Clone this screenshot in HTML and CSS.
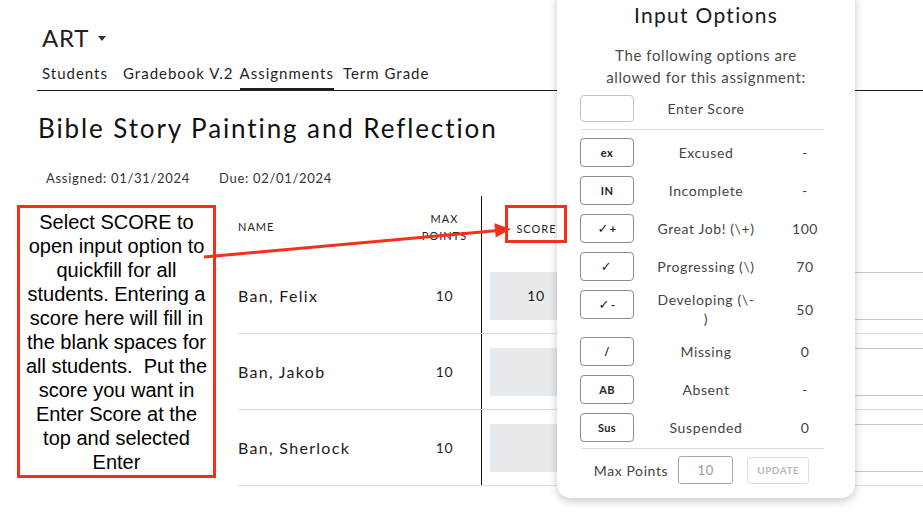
FILE: index.html
```html
<!DOCTYPE html>
<html lang="en">
<head>
<meta charset="utf-8">
<title>Bible Story Painting and Reflection</title>
<link rel="stylesheet" href="styles.css">
</head>
<body>
<div class="page">
  <div class="course">ART <span class="caret"></span></div>
  <nav class="tabs">
    <span class="tab t1">Students</span>
    <span class="tab t2">Gradebook V.2</span>
    <span class="tab t3 active">Assignments</span>
    <span class="tab t4">Term Grade</span>
  </nav>
  <h1 class="title">Bible Story Painting and Reflection</h1>
  <div class="dates"><span>Assigned: 01/31/2024</span><span>Due: 02/01/2024</span></div>
  <div class="grid">
    <div class="row head">
      <div class="c name">NAME</div>
      <div class="c max">MAX<br>POINTS</div>
      <div class="c score">SCORE</div>
      <div class="c rest"></div>
    </div>
    <div class="row body">
      <div class="c name">Ban, Felix</div>
      <div class="c max">10</div>
      <div class="c score"><div class="score-box">10</div></div>
      <div class="c rest"><div class="rest-box"></div></div>
    </div>
    <div class="row body">
      <div class="c name">Ban, Jakob</div>
      <div class="c max">10</div>
      <div class="c score"><div class="score-box"></div></div>
      <div class="c rest"><div class="rest-box"></div></div>
    </div>
    <div class="row body">
      <div class="c name">Ban, Sherlock</div>
      <div class="c max">10</div>
      <div class="c score"><div class="score-box"></div></div>
      <div class="c rest"><div class="rest-box"></div></div>
    </div>
  </div>
</div>

<div class="popup">
  <h2 class="popup-title">Input Options</h2>
  <p class="popup-sub">The following options are<br>allowed for this assignment:</p>
  <div class="opts">
    <div class="opt"><span class="key key-empty"></span><span class="opt-label">Enter Score</span><span class="opt-val"></span></div>
    <div class="sep"></div>
    <div class="opt"><span class="key">ex</span><span class="opt-label">Excused</span><span class="opt-val">-</span></div>
    <div class="opt"><span class="key">IN</span><span class="opt-label">Incomplete</span><span class="opt-val">-</span></div>
    <div class="opt"><span class="key"><span class="chk">✓</span>+</span><span class="opt-label">Great Job! (\+)</span><span class="opt-val">100</span></div>
    <div class="opt"><span class="key"><span class="chk">✓</span></span><span class="opt-label">Progressing (\)</span><span class="opt-val">70</span></div>
    <div class="opt"><span class="key"><span class="chk">✓</span>-</span><span class="opt-label">Developing (\-<br>)</span><span class="opt-val">50</span></div>
    <div class="opt"><span class="key">/</span><span class="opt-label">Missing</span><span class="opt-val">0</span></div>
    <div class="opt"><span class="key">AB</span><span class="opt-label">Absent</span><span class="opt-val">-</span></div>
    <div class="opt last"><span class="key">Sus</span><span class="opt-label">Suspended</span><span class="opt-val">0</span></div>
    <div class="sep sep2"></div>
  </div>
  <div class="maxrow">
    <span class="max-label">Max Points</span>
    <span class="max-input">10</span>
    <span class="update">UPDATE</span>
  </div>
</div>

<div class="callout">Select SCORE to<br>open input option to<br>quickfill for all<br>students. Entering a<br>score here will fill in<br>the blank spaces for<br>all students.&nbsp; Put the<br>score you want in<br>Enter Score at the<br>top and selected<br>Enter</div>
<div class="score-mark"></div>
<svg class="arrow" width="923" height="532" viewBox="0 0 923 532">
  <line x1="204" y1="257" x2="498" y2="230.6" stroke="#f4301c" stroke-width="3"/>
  <polygon points="511,229 495.7,237.6 494.4,223.3" fill="#f4301c"/>
</svg>
</body>
</html>
```

FILE: styles.css
```css
html, body {
  margin: 0;
  padding: 0;
}
body {
  width: 923px;
  height: 532px;
  overflow: hidden;
  position: relative;
  background: #fff;
  color: #1f1f1f;
  font-family: Lato, "DejaVu Sans", sans-serif;
}
.page {
  padding: 23px 0 0 37px;
}
.course {
  display: flex;
  align-items: center;
  gap: 9px;
  margin-left: 5px;
  height: 30px;
  font-size: 24px;
  line-height: 30px;
  letter-spacing: 0.8px;
}
.caret {
  width: 0;
  height: 0;
  border-left: 4.5px solid transparent;
  border-right: 4.5px solid transparent;
  border-top: 5px solid #333;
  margin-top: 1px;
}
.tabs {
  display: flex;
  align-items: flex-start;
  margin-top: 10px;
  padding-left: 5px;
  border-bottom: 1px solid #1f1f1f;
}
.tab {
  font-size: 15px;
  line-height: 20px;
  letter-spacing: 1px;
  padding-bottom: 7px;
}
.t1 { margin-right: 15px; }
.t2 { margin-right: 6px; }
.t3 { margin-right: 9px; }
.tab.active {
  border-bottom: 3px solid #1f1f1f;
  padding-bottom: 5px;
  margin-bottom: -1px;
}
.title {
  margin: 21px 0 0 1px;
  font-size: 26px;
  line-height: 32px;
  font-weight: 400;
  letter-spacing: 1.9px;
  color: #111;
}
.dates {
  display: flex;
  gap: 29px;
  margin: 26px 0 0 9px;
  font-size: 13px;
  line-height: 16px;
  letter-spacing: 0.7px;
  color: #333;
}
.grid {
  margin: 10px 0 0 201px;
}
.row {
  display: grid;
  grid-template-columns: 170px 73px 110px 1fr;
}
.row.head {
  height: 62px;
}
.row.body {
  height: 75px;
  border-bottom: 1px solid #dcdcdc;
}
.c {
  display: flex;
  align-items: center;
}
.head .c {
  font-size: 11px;
  letter-spacing: 1px;
  color: #222;
}
.head .name {
  padding-bottom: 2px;
  box-sizing: border-box;
}
.head .max {
  line-height: 17px;
}
.max {
  justify-content: center;
  text-align: center;
}
.body .name {
  font-size: 16px;
  letter-spacing: 1.3px;
  color: #1a1a1a;
}
.body .max {
  font-size: 14px;
  letter-spacing: 0.6px;
}
.score {
  border-left: 1px solid #111;
  justify-content: center;
}
.head .score {
  padding-top: 3px;
  box-sizing: border-box;
}
.body .score {
  justify-content: flex-start;
  padding-left: 8px;
}
.score-box {
  width: 92px;
  height: 48px;
  background: #e6eaed;
  display: flex;
  align-items: center;
  justify-content: center;
  font-size: 14px;
  letter-spacing: 0.6px;
  color: #1a1a1a;
}
.rest-box {
  width: 100%;
  height: 48px;
  box-sizing: border-box;
  border-top: 1px solid #c6c6c6;
  border-bottom: 1px solid #c6c6c6;
}

/* popup */
.popup {
  position: absolute;
  left: 557px;
  top: -12px;
  width: 298px;
  height: 510px;
  box-sizing: border-box;
  padding-top: 14px;
  background: #fff;
  border-radius: 14px;
  box-shadow: 0 3px 10px rgba(0, 0, 0, 0.22);
  z-index: 2;
}
.popup-title {
  margin: 0;
  text-align: center;
  font-size: 21px;
  line-height: 26px;
  font-weight: 400;
  letter-spacing: 1.3px;
  color: #1a1a1a;
}
.popup-sub {
  margin: 16px 0 0;
  text-align: center;
  font-size: 15px;
  line-height: 22px;
  letter-spacing: 0.6px;
  color: #4a4a4a;
}
.opts {
  margin: 7px 0 0 23px;
}
.opt {
  display: flex;
  align-items: center;
  margin-bottom: 9px;
  min-height: 29px;
}
.opt.last {
  margin-bottom: 0;
}
.key {
  align-self: flex-start;
  width: 54px;
  height: 29px;
  box-sizing: border-box;
  border: 1px solid #8c8c8c;
  border-radius: 4px;
  display: flex;
  align-items: center;
  justify-content: center;
  font-size: 11px;
  font-weight: 700;
  letter-spacing: 0.4px;
  color: #222;
}
.chk {
  font-family: "DejaVu Sans", sans-serif;
  font-size: 13px;
  font-weight: 700;
  margin-right: 1px;
}
.key-empty {
  height: 27px;
  border-color: #c2c2c2;
}
.opts .opt:first-child {
  margin-bottom: 0;
  min-height: 27px;
}
.opt-label {
  width: 144px;
  text-align: center;
  font-size: 14px;
  line-height: 19px;
  letter-spacing: 0.6px;
  color: #444;
}
.opt-val {
  width: 54px;
  text-align: center;
  font-size: 14px;
  letter-spacing: 0.6px;
  color: #444;
}
.sep {
  width: 243px;
  height: 1px;
  margin: 7px 0 8px 1px;
  background: #dedede;
}
.sep2 {
  margin: 6px 0 7px 1px;
}
.maxrow {
  display: flex;
  justify-content: center;
  align-items: center;
  padding-right: 9px;
}
.max-label {
  font-size: 14px;
  letter-spacing: 0.6px;
  color: #444;
  margin-right: 10px;
}
.max-input {
  width: 55px;
  height: 28px;
  box-sizing: border-box;
  border: 1px solid #a8a8a8;
  border-radius: 3px;
  display: flex;
  align-items: center;
  justify-content: center;
  font-size: 13px;
  letter-spacing: 0.6px;
  color: #9a9a9a;
  margin-right: 14px;
}
.update {
  width: 62px;
  height: 27px;
  box-sizing: border-box;
  border: 1px solid #dedede;
  border-radius: 3px;
  display: flex;
  align-items: center;
  justify-content: center;
  font-size: 10px;
  font-weight: 700;
  letter-spacing: 0.5px;
  color: #b9b9b9;
}

/* annotations */
.callout {
  position: absolute;
  left: 17px;
  top: 205px;
  width: 199px;
  height: 273px;
  box-sizing: border-box;
  border: 3px solid #f4301c;
  background: #fff;
  padding-top: 2px;
  text-align: center;
  font-family: "Liberation Sans", Arial, sans-serif;
  font-size: 20px;
  line-height: 24px;
  color: #000;
  white-space: nowrap;
  z-index: 3;
}
.score-mark {
  position: absolute;
  left: 505px;
  top: 205px;
  width: 62px;
  height: 38px;
  box-sizing: border-box;
  border: 3px solid #f4301c;
  z-index: 3;
}
.arrow {
  position: absolute;
  left: 0;
  top: 0;
  pointer-events: none;
  z-index: 3;
}
```
